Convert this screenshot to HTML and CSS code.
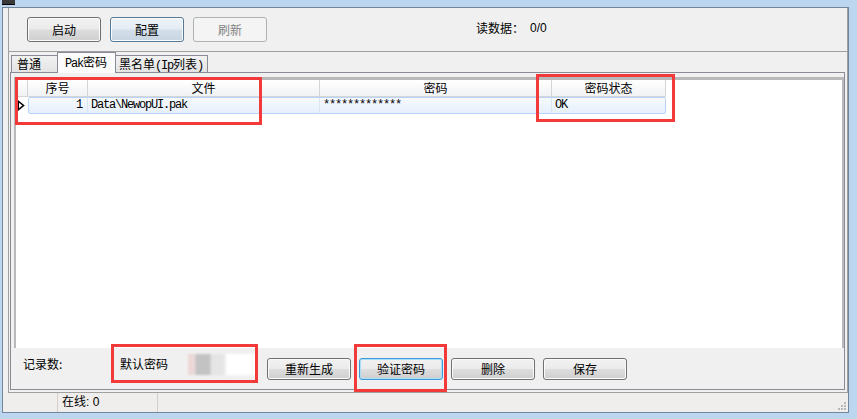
FILE: index.html
```html
<!DOCTYPE html>
<html>
<head>
<meta charset="utf-8">
<link rel="stylesheet" href="styles.css">
</head>
<body>
<div class="frame">
  <div class="tstrip"><div class="ticon"></div></div>
  <div class="client">
    <div class="main">
      <div class="toolbar">
        <div class="btn tb">启动</div>
        <div class="btn tb hot">配置</div>
        <div class="btn tb dis">刷新</div>
        <div class="readlbl">读数据：</div>
        <div class="readval">0/0</div>
      </div>
      <div class="tabs">
        <div class="tab t1">普通</div>
        <div class="tab sel t2"><span class="lat">Pak</span>密码</div>
        <div class="tab t3">黑名单<span class="lat">(Ip</span>列表<span class="lat">)</span></div>
      </div>
      <div class="page">
        <div class="grid">
          <div class="ghead">
            <div class="hc ind"></div>
            <div class="hc c1">序号</div>
            <div class="hc c2">文件</div>
            <div class="hc c3">密码</div>
            <div class="hc c4">密码状态</div>
          </div>
          <div class="grow">
            <div class="ind rowind">
              <svg width="8" height="11" viewBox="0 0 8 11"><path d="M1 1 L6.5 5.5 L1 10 Z" fill="#fff" stroke="#000" stroke-width="1.6" stroke-linejoin="miter"/><path d="M1 1 L1 10" stroke="#000" stroke-width="2"/></svg>
            </div>
            <div class="selband">
              <div class="dc d1 mono">1</div>
              <div class="dc d2 mono">Data\NewopUI.pak</div>
              <div class="dc d3 mono">*************</div>
              <div class="dc d4 mono">OK</div>
            </div>
          </div>
        </div>
        <div class="bottom">
          <div class="lbl rec">记录数:</div>
          <div class="lbl def">默认密码</div>
          <div class="pwd"></div>
          <div class="btns">
            <div class="btn bb">重新生成</div>
            <div class="btn bb focus">验证密码</div>
            <div class="btn bb">删除</div>
            <div class="btn bb">保存</div>
          </div>
        </div>
      </div>
    </div>
    <div class="status">
      <div class="s1"></div>
      <div class="s2">在线: 0</div>
      <div class="s3"></div>
      <svg class="grip" width="9" height="9" viewBox="0 0 9 9">
        <rect x="6" y="0" width="2" height="2" fill="#b8b8b8"/>
        <rect x="3" y="3" width="2" height="2" fill="#b8b8b8"/>
        <rect x="6" y="3" width="2" height="2" fill="#b8b8b8"/>
        <rect x="0" y="6" width="2" height="2" fill="#b8b8b8"/>
        <rect x="3" y="6" width="2" height="2" fill="#b8b8b8"/>
        <rect x="6" y="6" width="2" height="2" fill="#b8b8b8"/>
      </svg>
    </div>
  </div>
  <div class="mark m1"></div>
  <div class="mark m2"></div>
  <div class="mark m3"></div>
  <div class="mark m4"></div>
</div>
</body>
</html>
```

FILE: styles.css
```css
* { box-sizing: border-box; }
html, body { margin: 0; padding: 0; }
body {
  font-family: "Noto Sans CJK SC", "Liberation Sans", sans-serif;
  font-size: 12px;
  color: #000;
  background: #bcd5ee;
}
.frame {
  position: relative;
  width: 857px;
  height: 419px;
  background: #bdd6ef;
  display: flex;
  flex-direction: column;
  overflow: hidden;
}
.tstrip { height: 7px; display: flex; }
.ticon {
  width: 13px; height: 5px; margin-left: 2px;
  background: #3a3a3a;
  border-bottom: 1px solid #000;
}
.client {
  margin-left: 2px;
  width: 847px;
  height: 406px;
  background: #f0f0f0;
  border: 1px solid #74869a;
  display: flex;
  flex-direction: column;
}
.main {
  margin-left: 5px;
  width: 840px;
  height: 385px;
  border-left: 1px solid #a0a0a0;
  border-right: 1px solid #a0a0a0;
  border-bottom: 1px solid #a0a0a0;
  display: flex;
  flex-direction: column;
}
.toolbar {
  height: 44px;
  border-bottom: 1px solid #a0a0a0;
  padding: 9px 0 0 18px;
  display: flex;
  align-items: flex-start;
}
.btn {
  display: flex; align-items: center; justify-content: center;
  border: 1px solid #707070;
  border-radius: 3px;
  background: linear-gradient(#f2f2f2 0%, #ebebeb 48%, #dddddd 52%, #cfcfcf 100%);
  box-shadow: inset 0 0 0 1px #fbfbfb;
  font-size: 12px;
  line-height: 14px;
}
.tb { width: 74px; height: 25px; margin-right: 9px; }
.tb.hot {
  border-color: #56799a;
  background: linear-gradient(#edf3f8 0%, #e4ecf3 48%, #d3dfea 52%, #c7d5e1 100%);
}
.tb.dis {
  border-color: #adb2b5;
  background: #f4f4f4;
  box-shadow: none;
  color: #838383;
}
.readlbl { margin-left: 200px; margin-top: 4px; line-height: 14px; }
.readval { margin-left: 6px; margin-top: 4px; line-height: 14px; font-family: "Liberation Sans", sans-serif; font-size: 12px; }
.lat { font-family: "Liberation Mono", monospace; font-size: 12px; letter-spacing: -1.2px; }
.tabs {
  height: 21px;
  padding-left: 2px;
  display: flex;
  align-items: flex-end;
}
.tab {
  height: 17px;
  border: 1px solid #898c95;
  border-bottom: none;
  background: linear-gradient(#f2f2f2, #e3e3e3);
  line-height: 15px;
  margin-bottom: 1px;
  white-space: nowrap;
}
.t1 { width: 47px; padding-left: 5px; }
.t2 { width: 59px; padding-left: 7px; margin-left: -1px; }
.t3 { width: 92px; padding-left: 3px; margin-left: -1px; }
.tab.sel {
  height: 21px;
  margin-bottom: 0;
  background: #fbfbfb;
  position: relative;
  z-index: 2;
  line-height: 18px;
  border-left: 1px solid #898c95;
  border-right: 1px solid #898c95;
}
.tab.sel + .tab { border-left: none; margin-left: 0; }
.page {
  margin: -1px 2px 2px 1px;
  height: 318px;
  border: 1px solid #898c95;
  background: #f0f0f0;
  display: flex;
  flex-direction: column;
}
.grid {
  margin: 4px 0 0 3px;
  height: 271px;
  background: #fff;
  border-top: 3px solid #b9b9b9;
  border-left: 2px solid #b9b9b9;
  border-right: 2px solid #b9b9b9;
}
.ghead {
  display: flex;
  height: 17px;
}
.hc {
  height: 17px;
  border-right: 1px solid #d5d5d5;
  border-bottom: 1px solid #d5d5d5;
  background: linear-gradient(#ffffff, #f1f2f4);
  text-align: center;
  line-height: 16px;
}
.ind { width: 12px; flex: none; }
.c1 { width: 60px; }
.c2 { width: 232px; }
.c3 { width: 232px; }
.c4 { width: 114px; }
.grow { display: flex; height: 17px; }
.rowind { display: flex; align-items: center; padding-left: 1px; }
.selband {
  display: flex;
  width: 638px;
  height: 17px;
  border: 1px solid #b6d4f7;
  border-radius: 2px;
  background: linear-gradient(#f6fafe, #e6effb);
}
.dc {
  height: 15px;
  line-height: 15px;
  border-right: 1px solid #dbe6f3;
  white-space: nowrap;
}
.mono { font-family: "Liberation Mono", monospace; font-size: 12px; letter-spacing: -1.2px; }
.d1 { width: 59px; text-align: right; padding-right: 5px; }
.d2 { width: 232px; padding-left: 3px; }
.d3 { width: 232px; padding-left: 3px; }
.d4 { width: 113px; padding-left: 3px; border-right: none; }
.bottom {
  flex: 1;
  display: flex;
  align-items: flex-start;
  padding: 10px 0 0 12px;
}
.lbl { line-height: 12px; }
.rec { width: 97px; }
.def { width: 68px; }
.pwd {
  width: 68px;
  height: 21px;
  margin-top: -4px;
  background:
    linear-gradient(to right, #f0d4d4 0px, #e9dada 7px, #c3c3c3 8px, #c3c3c3 22px, #e4e4e4 23px, #e6e6e6 36px, #ffffff 39px);
  filter: blur(1px);
}
.btns { display: flex; margin-left: 11px; }
.bb { width: 84px; height: 22px; margin-right: 8px; }
.bb.focus {
  border-color: #3c9ad8;
  box-shadow: inset 0 0 0 1px #a9def8;
}
.status {
  height: 19px;
  background: #f0eeec;
  display: flex;
  align-items: stretch;
  font-family: "Liberation Sans", "Noto Sans CJK SC", sans-serif;
}
.s1 { width: 55px; border-right: 1px solid #d3d0cc; }
.s2 { width: 100px; border-right: 1px solid #d3d0cc; padding-left: 4px; line-height: 19px; }
.s3 { flex: 1; }
.grip { align-self: flex-end; margin: 0 1px 1px 0; }
.mark {
  position: absolute;
  border: 3px solid #f23a3a;
  z-index: 10;
}
.m1 { left: 15px; top: 77px; width: 247px; height: 48px; }
.m2 { left: 536px; top: 74px; width: 139px; height: 48px; }
.m3 { left: 111px; top: 344px; width: 147px; height: 39px; }
.m4 { left: 354px; top: 344px; width: 93px; height: 48px; }
```
